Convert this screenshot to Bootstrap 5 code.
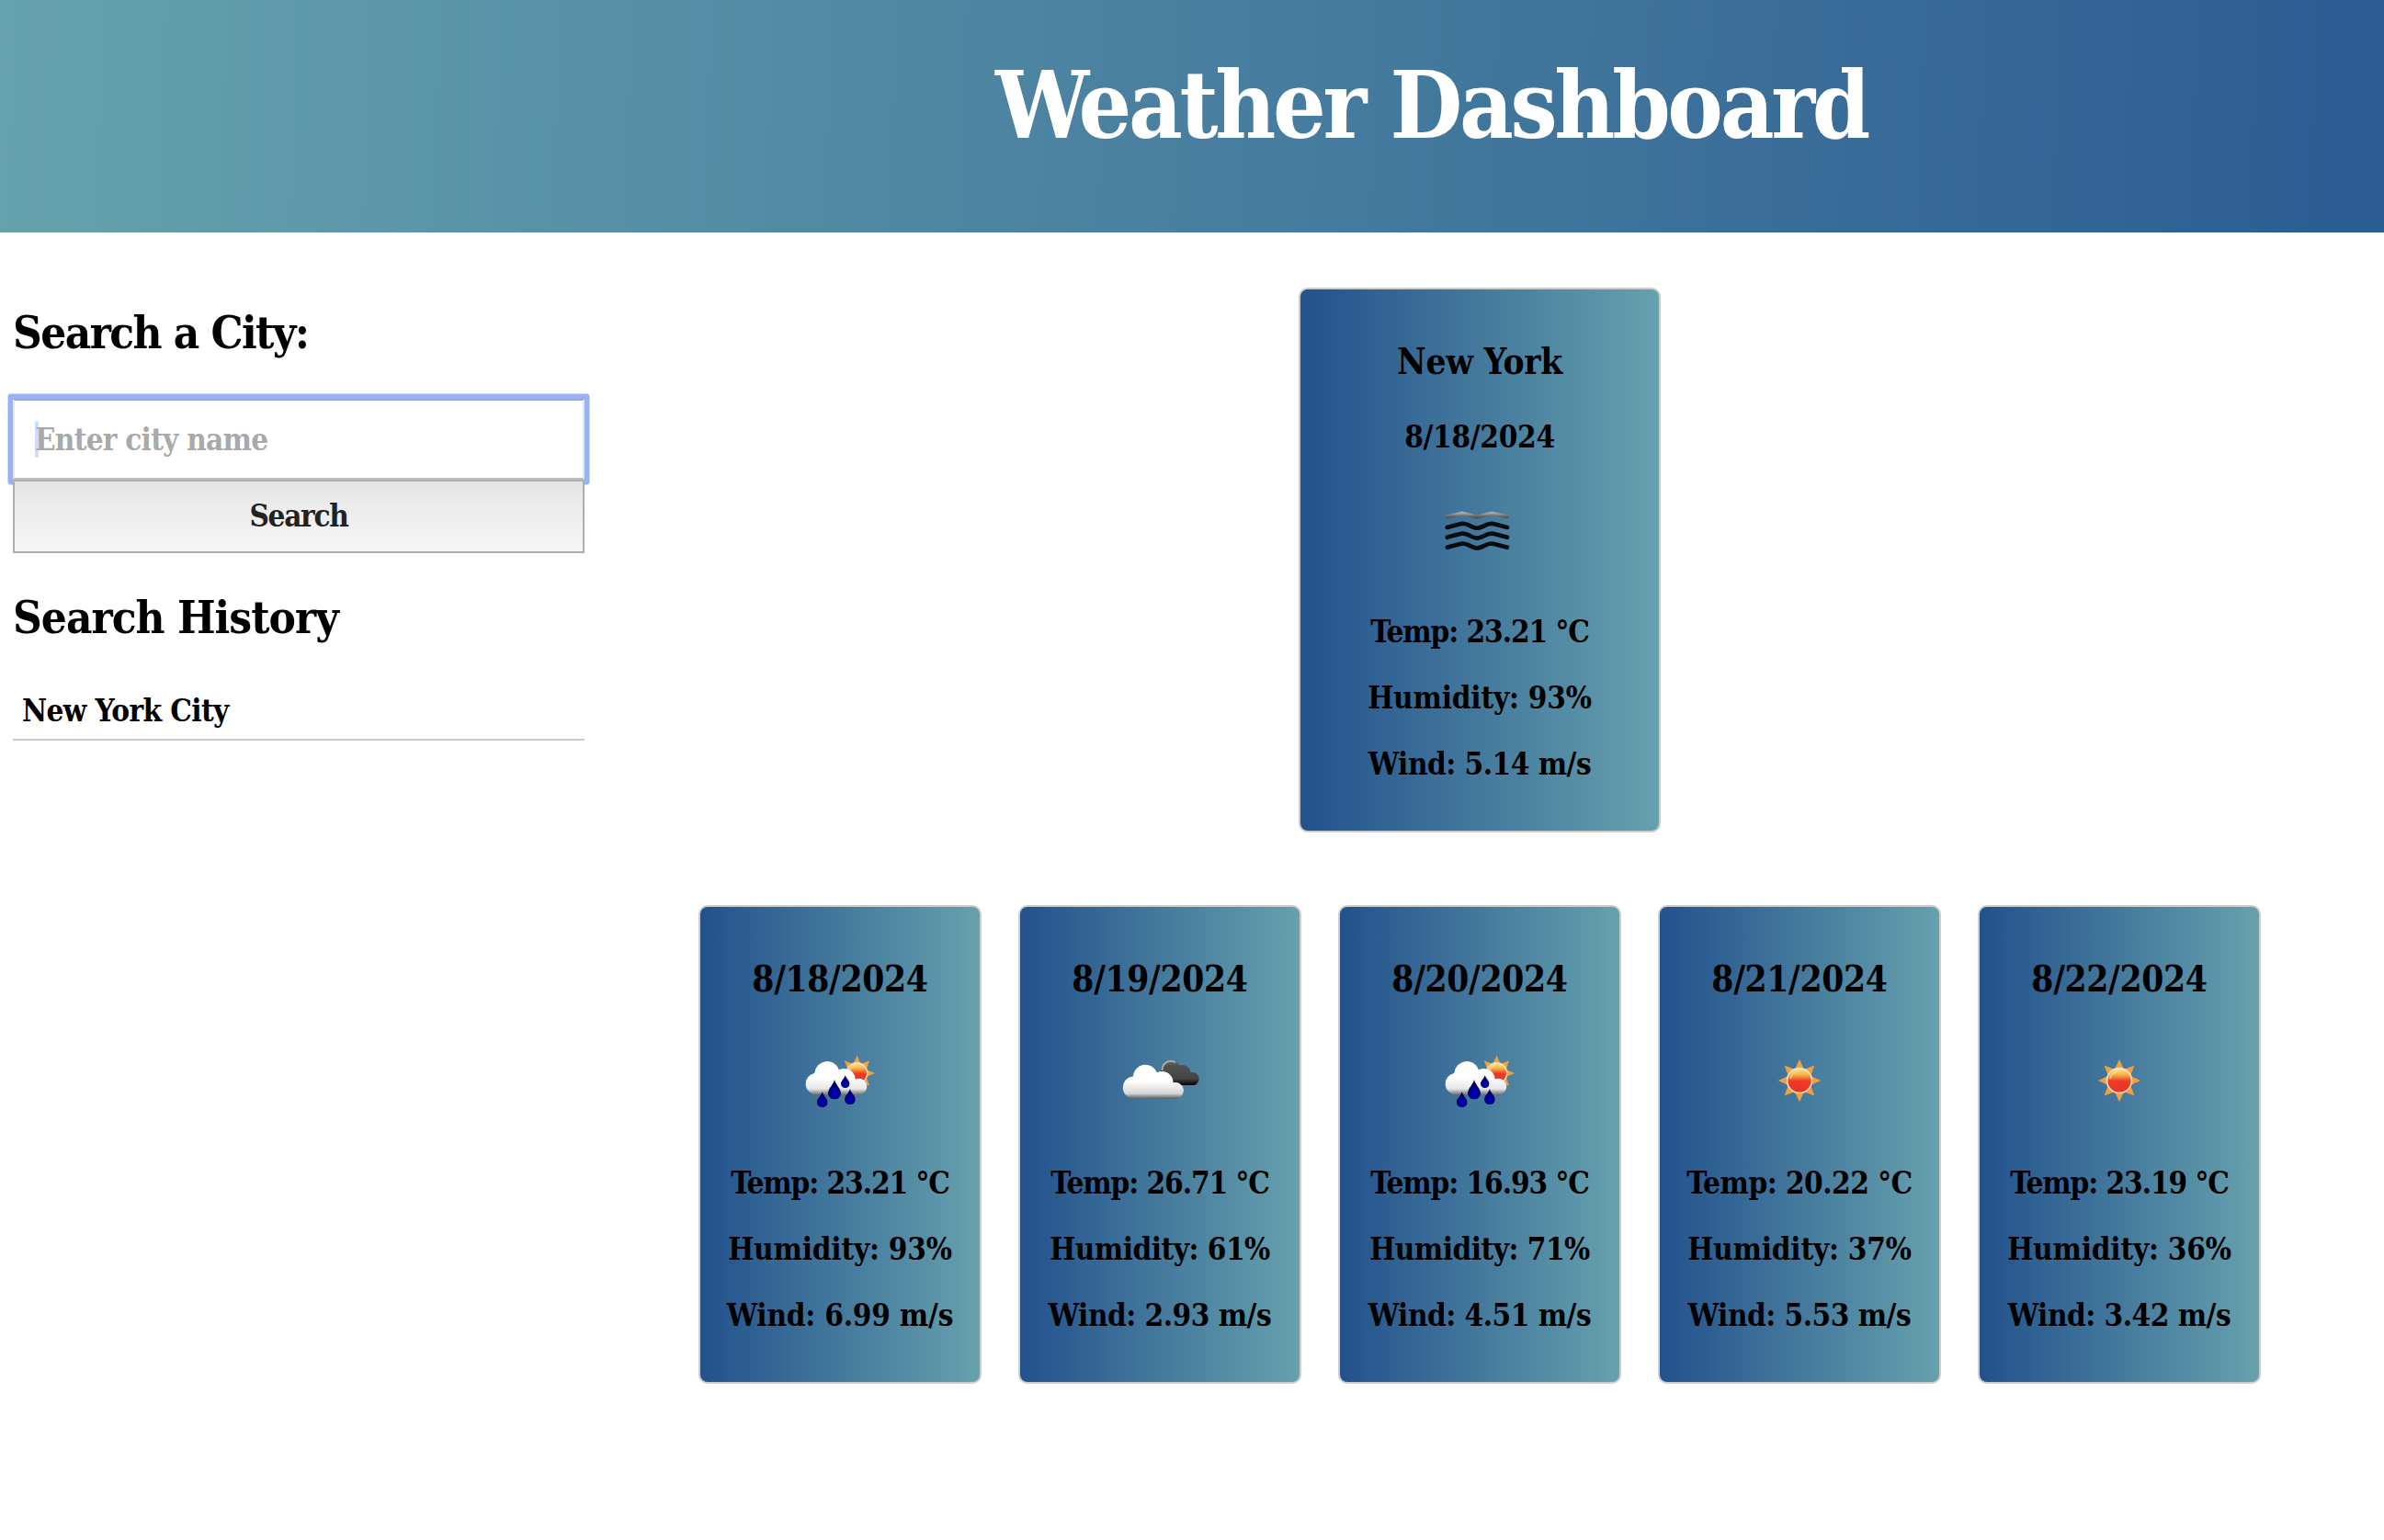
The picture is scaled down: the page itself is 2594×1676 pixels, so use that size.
<!DOCTYPE html>
<html lang="en">
<head>
<meta charset="utf-8">
<title>Weather Dashboard</title>
<link href="https://cdn.jsdelivr.net/npm/bootstrap@5.3.0/dist/css/bootstrap.min.css" rel="stylesheet">
<style>
  body { font-family: "DejaVu Serif Condensed", "DejaVu Serif", serif; font-stretch: condensed; font-weight: 700; font-size: 33px; line-height: 40px; letter-spacing: -.5px; color: #000; background: #fff; }
  .site-header { height: 253px; padding: 55px 0 0 521px; background: linear-gradient(92deg, #66a2ad, #2b5c92); color: #fff; text-align: center; }
  .site-title { font-size: 101px; line-height: 120px; font-weight: 700; letter-spacing: -3.3px; }
  .search-panel { width: 636px; padding: 79px 0 0 14px; }
  .panel-heading { font-size: 49px; line-height: 60px; font-weight: 700; margin-bottom: 42px; letter-spacing: -1px; }
  .panel-heading.tight { letter-spacing: -1.6px; }
  .city-input { height: 88px; padding: 0 22px; font: inherit; letter-spacing: -.75px; background: #fff; border: 2px solid #e6e6e6; border-top-color: #8fa9e8; border-bottom-color: #bdbdbd; box-shadow: 0 0 0 5.5px #97b3f5; border-radius: 1px; }
  .city-input::placeholder { color: #a9a9a9; opacity: 1; }
  .text-caret { left: 24px; top: 24px; width: 4px; height: 40px; border-radius: 2px; background: rgba(150, 187, 252, .5); }
  .search-btn { height: 80px; padding: 0; font: inherit; letter-spacing: -1.3px; color: #222; border: 2px solid #adadad; border-radius: 0; background: linear-gradient(#e3e3e3, #ececec 35%, #f6f6f6); margin-bottom: 40px; position: relative; }
  .history-item { padding: 10px; border-bottom: 2px solid #ccc; letter-spacing: -.6px; }
  .weather-area { padding: 60px 10px 0 0; }
  .weather-card { padding: 59px 0 52px; border: 2px solid #ccc; border-radius: 10px; text-align: center; white-space: nowrap; background: linear-gradient(90deg, #22518c, #66a1ad); }
  .today-card { width: 394px; margin-bottom: 79px; }
  .day-card { width: 308px; }
  .card-name { font-size: 38.5px; line-height: 40px; font-weight: 700; margin: 0; letter-spacing: -.3px; }
  .today-date { margin-top: 42px; letter-spacing: -.3px; }
  .weather-icon { width: 100px; height: 100px; margin: 41px auto; display: block; }
  .today-card .weather-icon { margin-top: 31px; }
  .readings { display: grid; gap: 32px; }
  .r-temp { letter-spacing: -1.05px; }
  .r-hum { letter-spacing: -.2px; }
  .gap-days { gap: 40px; }
</style>
</head>
<body>
<svg width="0" height="0" class="position-absolute" aria-hidden="true">
  <defs>
    <linearGradient id="gSun" x1="0" y1="0" x2="0" y2="1"><stop offset="0" stop-color="#fbe38c"/><stop offset=".25" stop-color="#f5b243"/><stop offset=".52" stop-color="#ee3a26"/><stop offset="1" stop-color="#ea3323"/></linearGradient>
    <linearGradient id="gRainCloud" gradientUnits="userSpaceOnUse" x1="0" y1="26" x2="0" y2="65"><stop offset=".5" stop-color="#fff"/><stop offset=".82" stop-color="#e6e6e6"/><stop offset="1" stop-color="#666"/></linearGradient>
    <linearGradient id="gCloud" gradientUnits="userSpaceOnUse" x1="0" y1="30" x2="0" y2="69"><stop offset=".5" stop-color="#fff"/><stop offset=".85" stop-color="#d5d5d5"/><stop offset="1" stop-color="#555"/></linearGradient>
    <linearGradient id="gDark" gradientUnits="userSpaceOnUse" x1="0" y1="26" x2="0" y2="54"><stop offset="0" stop-color="#707070"/><stop offset=".25" stop-color="#505050"/><stop offset=".75" stop-color="#444"/><stop offset="1" stop-color="#000"/></linearGradient>
    <radialGradient id="gDrop" cx=".5" cy=".68" r=".5"><stop offset="0" stop-color="#0000d8"/><stop offset="1" stop-color="#000058"/></radialGradient>
    <linearGradient id="gMist" x1="0" y1="0" x2="0" y2="1"><stop offset="0" stop-color="#a5a5a5"/><stop offset="1" stop-color="#555"/></linearGradient>
    <symbol id="sun" viewBox="-24 -24 48 48">
      <g fill="#f0a03c">
        <path id="ray" d="M0-23.3-5.5-11H5.5ZM0 23.3-5.5 11H5.5ZM-23.3 0-11-5.5V5.5ZM23.3 0 11-5.5V5.5Z"/>
        <use href="#ray" transform="rotate(45)"/>
      </g>
      <circle r="14.3" fill="#f6dcc0"/><circle r="12.6" fill="url(#gSun)"/>
      <path d="M-10-2A10.5 10.5 0 0 1-2-10" fill="none" stroke="#fbe08a" stroke-width="1.6" opacity=".8"/>
    </symbol>
    <symbol id="drop" viewBox="0 0 13 20" preserveAspectRatio="none"><path d="M6.5 0C7.5 5 13 9 13 13.6A6.5 6.4 0 0 1 0 13.6C0 9 5.5 5 6.5 0Z" fill="url(#gDrop)"/></symbol>
    <symbol id="i-sun" viewBox="0 0 100 100"><use href="#sun" x="26" y="25" width="48" height="48"/></symbol>
    <symbol id="i-rain" viewBox="0 0 100 100">
      <use href="#sun" x="48.5" y="21" width="40" height="40"/>
      <path d="M24.5 64.3A11.8 11.8 0 0 1 22.2 40.9A13.8 13.8 0 0 1 49 37.3A12.3 12.3 0 0 1 66.8 47.5A8.8 8.8 0 1 1 70 64.3Z" fill="url(#gRainCloud)"/>
      <use href="#drop" x="37" y="48" width="14" height="21.500"/>
      <use href="#drop" x="51" y="43" width="9.500" height="14"/>
      <use href="#drop" x="24.800" y="61" width="11.800" height="17"/>
      <use href="#drop" x="55" y="58" width="11.800" height="17"/>
    </symbol>
    <symbol id="i-clouds" viewBox="0 0 100 100">
      <g transform="translate(1 0)">
      <path d="M56 54A10 10 0 0 1 50 38A11 11 0 0 1 70.5 32.5A9 9 0 0 1 82.500 40.400A7 7 0 1 1 86.500 54Z" fill="url(#gDark)"/>
      <path d="M51.6 38A9.5 9.5 0 0 1 66 29.2" fill="none" stroke="#aaa" stroke-width="2"/>
      <path d="M22 68.7A11.8 11.8 0 0 1 19.8 44.5A13.6 13.6 0 0 1 46 40.2A12.3 12.3 0 0 1 63.6 51.2A9 9 0 1 1 68 68.7Z" fill="url(#gCloud)"/>
      </g>
    </symbol>
    <symbol id="i-mist" viewBox="0 0 100 100">
      <g fill="none" stroke-width="4.6" stroke-linecap="round" stroke="#080c10">
        <path stroke="url(#gMist)" stroke-width="4" d="M14.700 35.400Q24 33.500 31 31.500Q39 33.500 47.300 36Q55.500 33.500 63.500 31.500Q71 33.500 80 35.400"/>
        <path id="wave" d="M14.700 47Q23 44.500 31 42.800C37 42.500 42 47.800 47.300 47.800C52.500 47.800 57.500 42.500 63.500 42.800Q71.500 44.500 80 47"/>
        <use href="#wave" y="10.800"/><use href="#wave" y="21.700"/>
      </g>
    </symbol>
  </defs>
</svg>

<header class="site-header"><h1 class="site-title m-0">Weather Dashboard</h1></header>

<div class="d-flex">
  <aside class="search-panel flex-shrink-0">
    <h2 class="panel-heading tight">Search a City:</h2>
    <div class="position-relative">
      <input class="form-control city-input" type="text" placeholder="Enter city name">
      <span class="text-caret position-absolute"></span>
    </div>
    <button class="btn search-btn w-100 d-block" type="button">Search</button>
    <h2 class="panel-heading">Search History</h2>
    <ul class="list-unstyled m-0"><li class="history-item">New York City</li></ul>
  </aside>

  <main class="weather-area flex-grow-1 d-flex flex-column align-items-center">
    <section class="weather-card today-card">
      <h3 class="card-name">New York</h3>
      <div class="today-date">8/18/2024</div>
      <svg class="weather-icon"><use href="#i-mist"/></svg>
      <div class="readings"><div class="r-temp">Temp: 23.21 °C</div><div class="r-hum">Humidity: 93%</div><div class="r-wind">Wind: 5.14 m/s</div></div>
    </section>
    <div class="d-flex gap-days">
      <section class="weather-card day-card">
        <h3 class="card-name">8/18/2024</h3>
        <svg class="weather-icon"><use href="#i-rain"/></svg>
        <div class="readings"><div class="r-temp">Temp: 23.21 °C</div><div class="r-hum">Humidity: 93%</div><div class="r-hum">Wind: 6.99 m/s</div></div>
      </section>
      <section class="weather-card day-card">
        <h3 class="card-name">8/19/2024</h3>
        <svg class="weather-icon"><use href="#i-clouds"/></svg>
        <div class="readings"><div class="r-temp">Temp: 26.71 °C</div><div>Humidity: 61%</div><div>Wind: 2.93 m/s</div></div>
      </section>
      <section class="weather-card day-card">
        <h3 class="card-name">8/20/2024</h3>
        <svg class="weather-icon"><use href="#i-rain"/></svg>
        <div class="readings"><div class="r-temp">Temp: 16.93 °C</div><div>Humidity: 71%</div><div>Wind: 4.51 m/s</div></div>
      </section>
      <section class="weather-card day-card">
        <h3 class="card-name">8/21/2024</h3>
        <svg class="weather-icon"><use href="#i-sun"/></svg>
        <div class="readings"><div>Temp: 20.22 °C</div><div class="r-hum">Humidity: 37%</div><div>Wind: 5.53 m/s</div></div>
      </section>
      <section class="weather-card day-card">
        <h3 class="card-name">8/22/2024</h3>
        <svg class="weather-icon"><use href="#i-sun"/></svg>
        <div class="readings"><div class="r-temp">Temp: 23.19 °C</div><div class="r-hum">Humidity: 36%</div><div>Wind: 3.42 m/s</div></div>
      </section>
    </div>
  </main>
</div>
<script src="https://cdn.jsdelivr.net/npm/bootstrap@5.3.0/dist/js/bootstrap.bundle.min.js"></script>
</body>
</html>
